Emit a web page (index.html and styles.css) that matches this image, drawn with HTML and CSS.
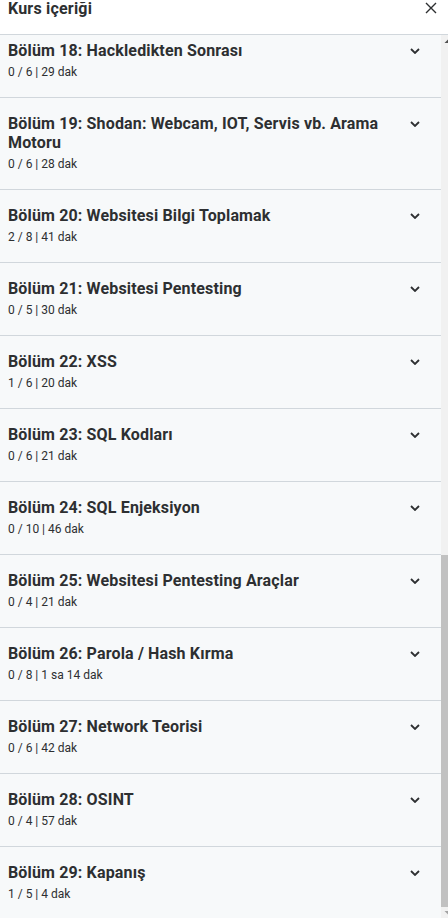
FILE: index.html
```html
<!DOCTYPE html>
<html lang="tr">

<head>
    <meta charset="UTF-8">
    <meta name="viewport" content="width=device-width, initial-scale=1.0">
    <title>Kurs içeriği</title>
    <link rel="stylesheet" href="styles.css">
</head>

<body>
    <div class="panel">
        <div class="panel-header">
            <h2 class="panel-title">Kurs içeriği</h2>
            <button class="close-button" aria-label="Kapat">
                <svg width="12" height="12" viewBox="0 0 12 12">
                    <path d="M1 1 L11 11 M11 1 L1 11" stroke="#2d2f31" stroke-width="1.4" fill="none"/>
                </svg>
            </button>
        </div>

        <div class="panel-body">
            <div class="section-list">
                <div class="section-list-inner" id="sectionList"></div>
            </div>
            <div class="scrollbar">
                <div class="scroll-arrow">
                    <svg width="7" height="15" viewBox="0 0 7 15"><polygon points="3.5,8 7.5,4 11.5,8" fill="#505050"/></svg>
                </div>
                <div class="scroll-track"></div>
                <div class="scroll-thumb"></div>
                <div class="scroll-arrow scroll-arrow-down">
                    <svg width="7" height="11" viewBox="0 0 7 11"><polygon points="3.5,4 7.5,8 11.5,4" fill="#a3a3a3"/></svg>
                </div>
            </div>
        </div>
    </div>

    <script>
        const sections = [
            { title: 'Bölüm 18: Hackledikten Sonrası', done: 0, total: 6, time: '29 dak' },
            { title: 'Bölüm 19: Shodan: Webcam, IOT, Servis vb. Arama Motoru', done: 0, total: 6, time: '28 dak' },
            { title: 'Bölüm 20: Websitesi Bilgi Toplamak', done: 2, total: 8, time: '41 dak' },
            { title: 'Bölüm 21: Websitesi Pentesting', done: 0, total: 5, time: '30 dak' },
            { title: 'Bölüm 22: XSS', done: 1, total: 6, time: '20 dak' },
            { title: 'Bölüm 23: SQL Kodları', done: 0, total: 6, time: '21 dak' },
            { title: 'Bölüm 24: SQL Enjeksiyon', done: 0, total: 10, time: '46 dak' },
            { title: 'Bölüm 25: Websitesi Pentesting Araçlar', done: 0, total: 4, time: '21 dak' },
            { title: 'Bölüm 26: Parola / Hash Kırma', done: 0, total: 8, time: '1 sa 14 dak' },
            { title: 'Bölüm 27: Network Teorisi', done: 0, total: 6, time: '42 dak' },
            { title: 'Bölüm 28: OSINT', done: 0, total: 4, time: '57 dak' },
            { title: 'Bölüm 29: Kapanış', done: 1, total: 5, time: '4 dak' }
        ];

        const sectionList = document.getElementById('sectionList');

        sectionList.innerHTML = sections.map(section => `
            <div class="section">
                <div class="section-text">
                    <div class="section-title">${section.title}</div>
                    <div class="section-meta">${section.done} / ${section.total} | ${section.time}</div>
                </div>
                <div class="section-chevron">
                    <svg width="10" height="6" viewBox="0 0 10 6">
                        <polyline points="1,1 5,5 9,1" stroke="#2d2f31" stroke-width="1.8" fill="none"/>
                    </svg>
                </div>
            </div>
        `).join('');
    </script>
</body>

</html>
```

FILE: styles.css
```css
body {
    margin: 0;
    padding: 0;
    background: white;
    font-family: Roboto, "Liberation Sans", Arial, sans-serif;
    color: #2d2f31;
}

.panel {
    height: 918px;
    display: flex;
    flex-direction: column;
    overflow: hidden;
}

.panel-header {
    height: 34px;
    flex-shrink: 0;
    display: flex;
    justify-content: space-between;
    align-items: flex-start;
    padding: 0 11px 0 8px;
    border-bottom: 1px solid #d1d7dc;
    background: white;
}

.panel-title {
    margin: 0;
    font-size: 16px;
    font-weight: 700;
    line-height: 18px;
    letter-spacing: 0.2px;
}

.close-button {
    background: none;
    border: none;
    padding: 0;
    margin-top: 2px;
    width: 12px;
    height: 12px;
    cursor: pointer;
}

.close-button svg {
    display: block;
}

.panel-body {
    flex: 1;
    display: flex;
    min-height: 0;
}

.section-list {
    flex: 1;
    overflow: hidden;
    background: #f7f9fa;
}

.section-list-inner {
    margin-top: -10px;
}

.section {
    display: flex;
    align-items: flex-start;
    gap: 16px;
    padding: 16px 21px 16px 8px;
    border-bottom: 1px solid #d1d7dc;
}

.section-text {
    flex: 1;
}

.section-title {
    font-size: 16px;
    font-weight: 700;
    line-height: 19px;
    letter-spacing: 0.15px;
    margin-bottom: 4px;
}

.section-meta {
    font-size: 12px;
    line-height: 17px;
}

.section-chevron {
    width: 10px;
    height: 19px;
    display: flex;
    align-items: center;
}

.section-chevron svg {
    display: block;
}

.scrollbar {
    width: 7px;
    flex-shrink: 0;
    display: flex;
    flex-direction: column;
    background: #f1f1f1;
    overflow: hidden;
}

.scroll-arrow {
    height: 15px;
    flex-shrink: 0;
}

.scroll-arrow svg {
    display: block;
}

.scroll-arrow-down {
    height: 11px;
}

.scroll-track {
    flex: 1;
}

.scroll-thumb {
    height: 352px;
    flex-shrink: 0;
    background: #c1c1c1;
}
```
